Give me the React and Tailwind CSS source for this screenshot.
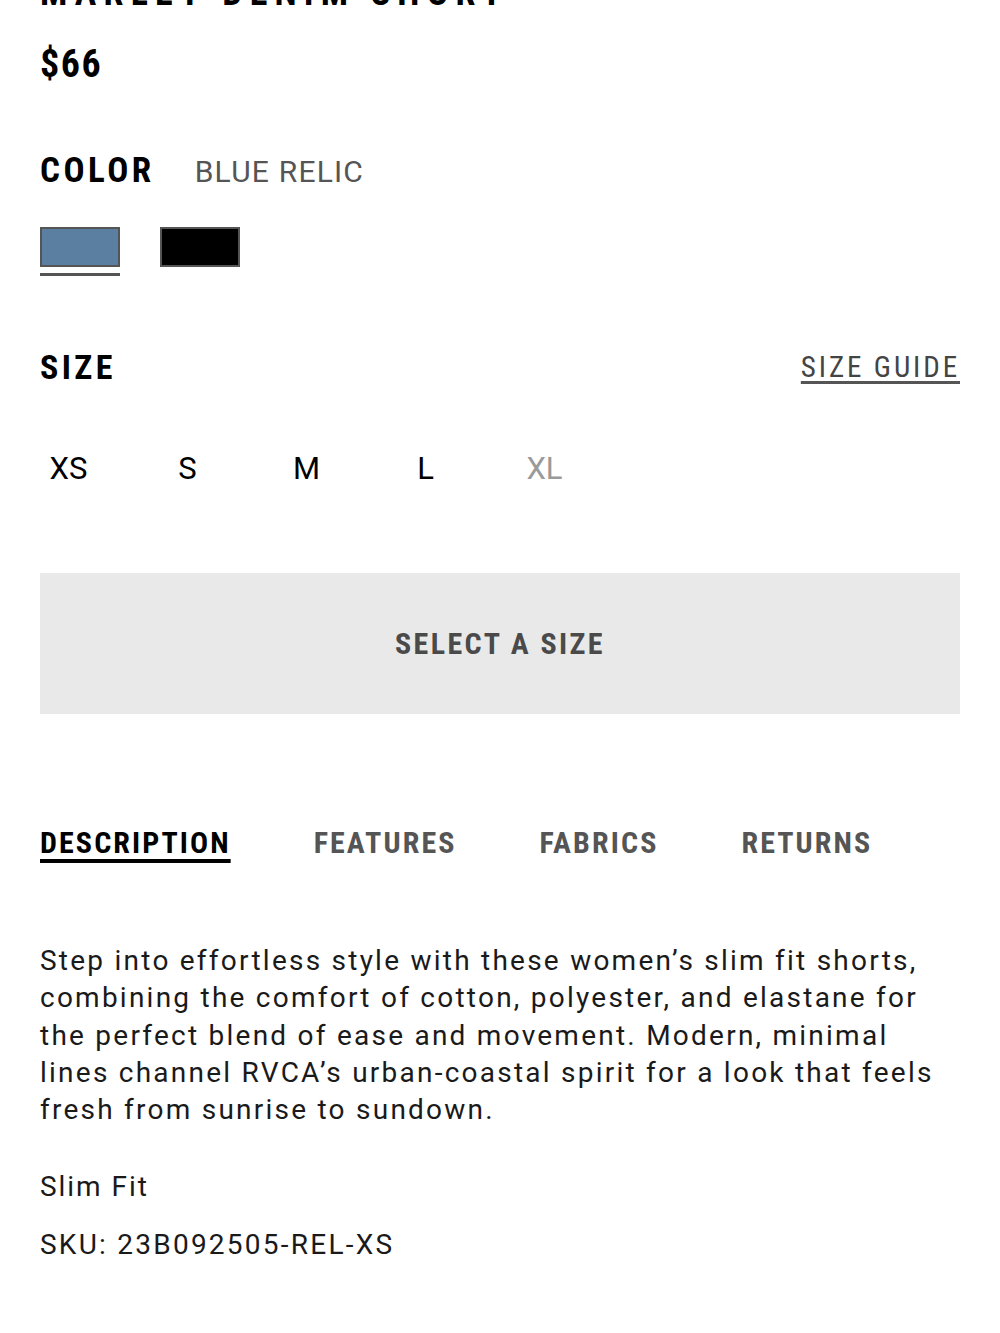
import React from "react";

const cond = "font-['Roboto_Condensed',Roboto,sans-serif] font-stretch-condensed";
const body = "font-['Roboto','Liberation_Sans',sans-serif]";

const sizes = [
  { label: "XS", available: true },
  { label: "S", available: true },
  { label: "M", available: true },
  { label: "L", available: true },
  { label: "XL", available: false },
];

const tabs = ["DESCRIPTION", "FEATURES", "FABRICS", "RETURNS"];

function App() {
  const [color, setColor] = React.useState("blue");
  const [tab, setTab] = React.useState("DESCRIPTION");

  return (
    <div className={`bg-white min-h-[1333px] px-10 overflow-hidden ${body}`}>
      {/* product title, scrolled mostly out of view */}
      <h1 className={`${cond} -mt-[27px] text-[36px] leading-[40px] font-bold tracking-[0.2em] text-black`}>
        MARLEY DENIM SHORT
      </h1>

      <p className={`${cond} mt-[29px] text-[38px] leading-[44px] font-bold tracking-[0.04em] text-black`}>$66</p>

      <div className="mt-[65px] h-[42px] flex items-baseline gap-[40px]">
        <span className={`${cond} text-[35px] leading-[40px] font-bold tracking-[0.1em] text-black`}>COLOR</span>
        <span className="text-[30px] leading-[40px] tracking-[0.04em] text-[#555]">
          {color === "blue" ? "BLUE RELIC" : "BLACK"}
        </span>
      </div>

      <div className="mt-[34px] flex gap-[40px]">
        {["blue", "black"].map((c) => (
          <button key={c} onClick={() => setColor(c)} className="flex flex-col">
            <span
              className={`block w-[80px] h-[40px] border-2 border-[#555] ${
                c === "blue" ? "bg-[#5b7fa0]" : "bg-black"
              }`}
            />
            <span className={`block mt-[6px] h-[3px] w-[80px] ${color === c ? "bg-[#555]" : "bg-transparent"}`} />
          </button>
        ))}
      </div>

      <div className="mt-[71px] h-[42px] flex items-baseline justify-between">
        <span className={`${cond} text-[34px] leading-[40px] font-bold tracking-[0.1em] text-black`}>SIZE</span>
        <a
          className={`${cond} -translate-y-[2px] text-[29px] leading-[40px] tracking-[0.1em] text-[#444] underline decoration-[3px] underline-offset-[4px] decoration-[#555]`}
        >
          SIZE GUIDE
        </a>
      </div>

      <div className="mt-[60px] h-[40px] flex gap-[62px]">
        {sizes.map((s) => (
          <button
            key={s.label}
            className={`w-[57px] text-center text-[31px] leading-[40px] ${s.available ? "text-black" : "text-[#9a9a9a]"}`}
          >
            {s.label}
          </button>
        ))}
      </div>

      <button className="mt-[84px] w-full h-[141px] bg-[#e9e9e9] flex items-center justify-center">
        <span className={`${cond} text-[30px] leading-[30px] font-bold tracking-[0.08em] text-[#4a4a4a]`}>
          SELECT A SIZE
        </span>
      </button>

      <div className="mt-[109px] h-[40px] flex gap-[83px]">
        {tabs.map((t) => (
          <button
            key={t}
            onClick={() => setTab(t)}
            className={`${cond} text-[30px] leading-[40px] font-bold tracking-[0.07em] ${
              tab === t
                ? "text-black underline decoration-[4px] underline-offset-[6px]"
                : "text-[#555]"
            }`}
          >
            {t}
          </button>
        ))}
      </div>

      <p className="mt-[79px] text-[28px] leading-[37.3px] tracking-[0.08em] text-[#1a1a1a]">
        Step into effortless style with these women’s slim fit shorts, combining the comfort of cotton,
        polyester, and elastane for the perfect blend of ease and movement. Modern, minimal lines channel
        RVCA’s urban-coastal spirit for a look that feels fresh from sunrise to sundown.
      </p>

      <p className="mt-[40px] text-[28px] leading-[37.3px] tracking-[0.07em] text-[#1a1a1a]">Slim Fit</p>
      <p className="mt-[20px] text-[28px] leading-[37.3px] tracking-[0.08em] text-[#1a1a1a]">SKU: 23B092505-REL-XS</p>
    </div>
  );
}

export default App;
